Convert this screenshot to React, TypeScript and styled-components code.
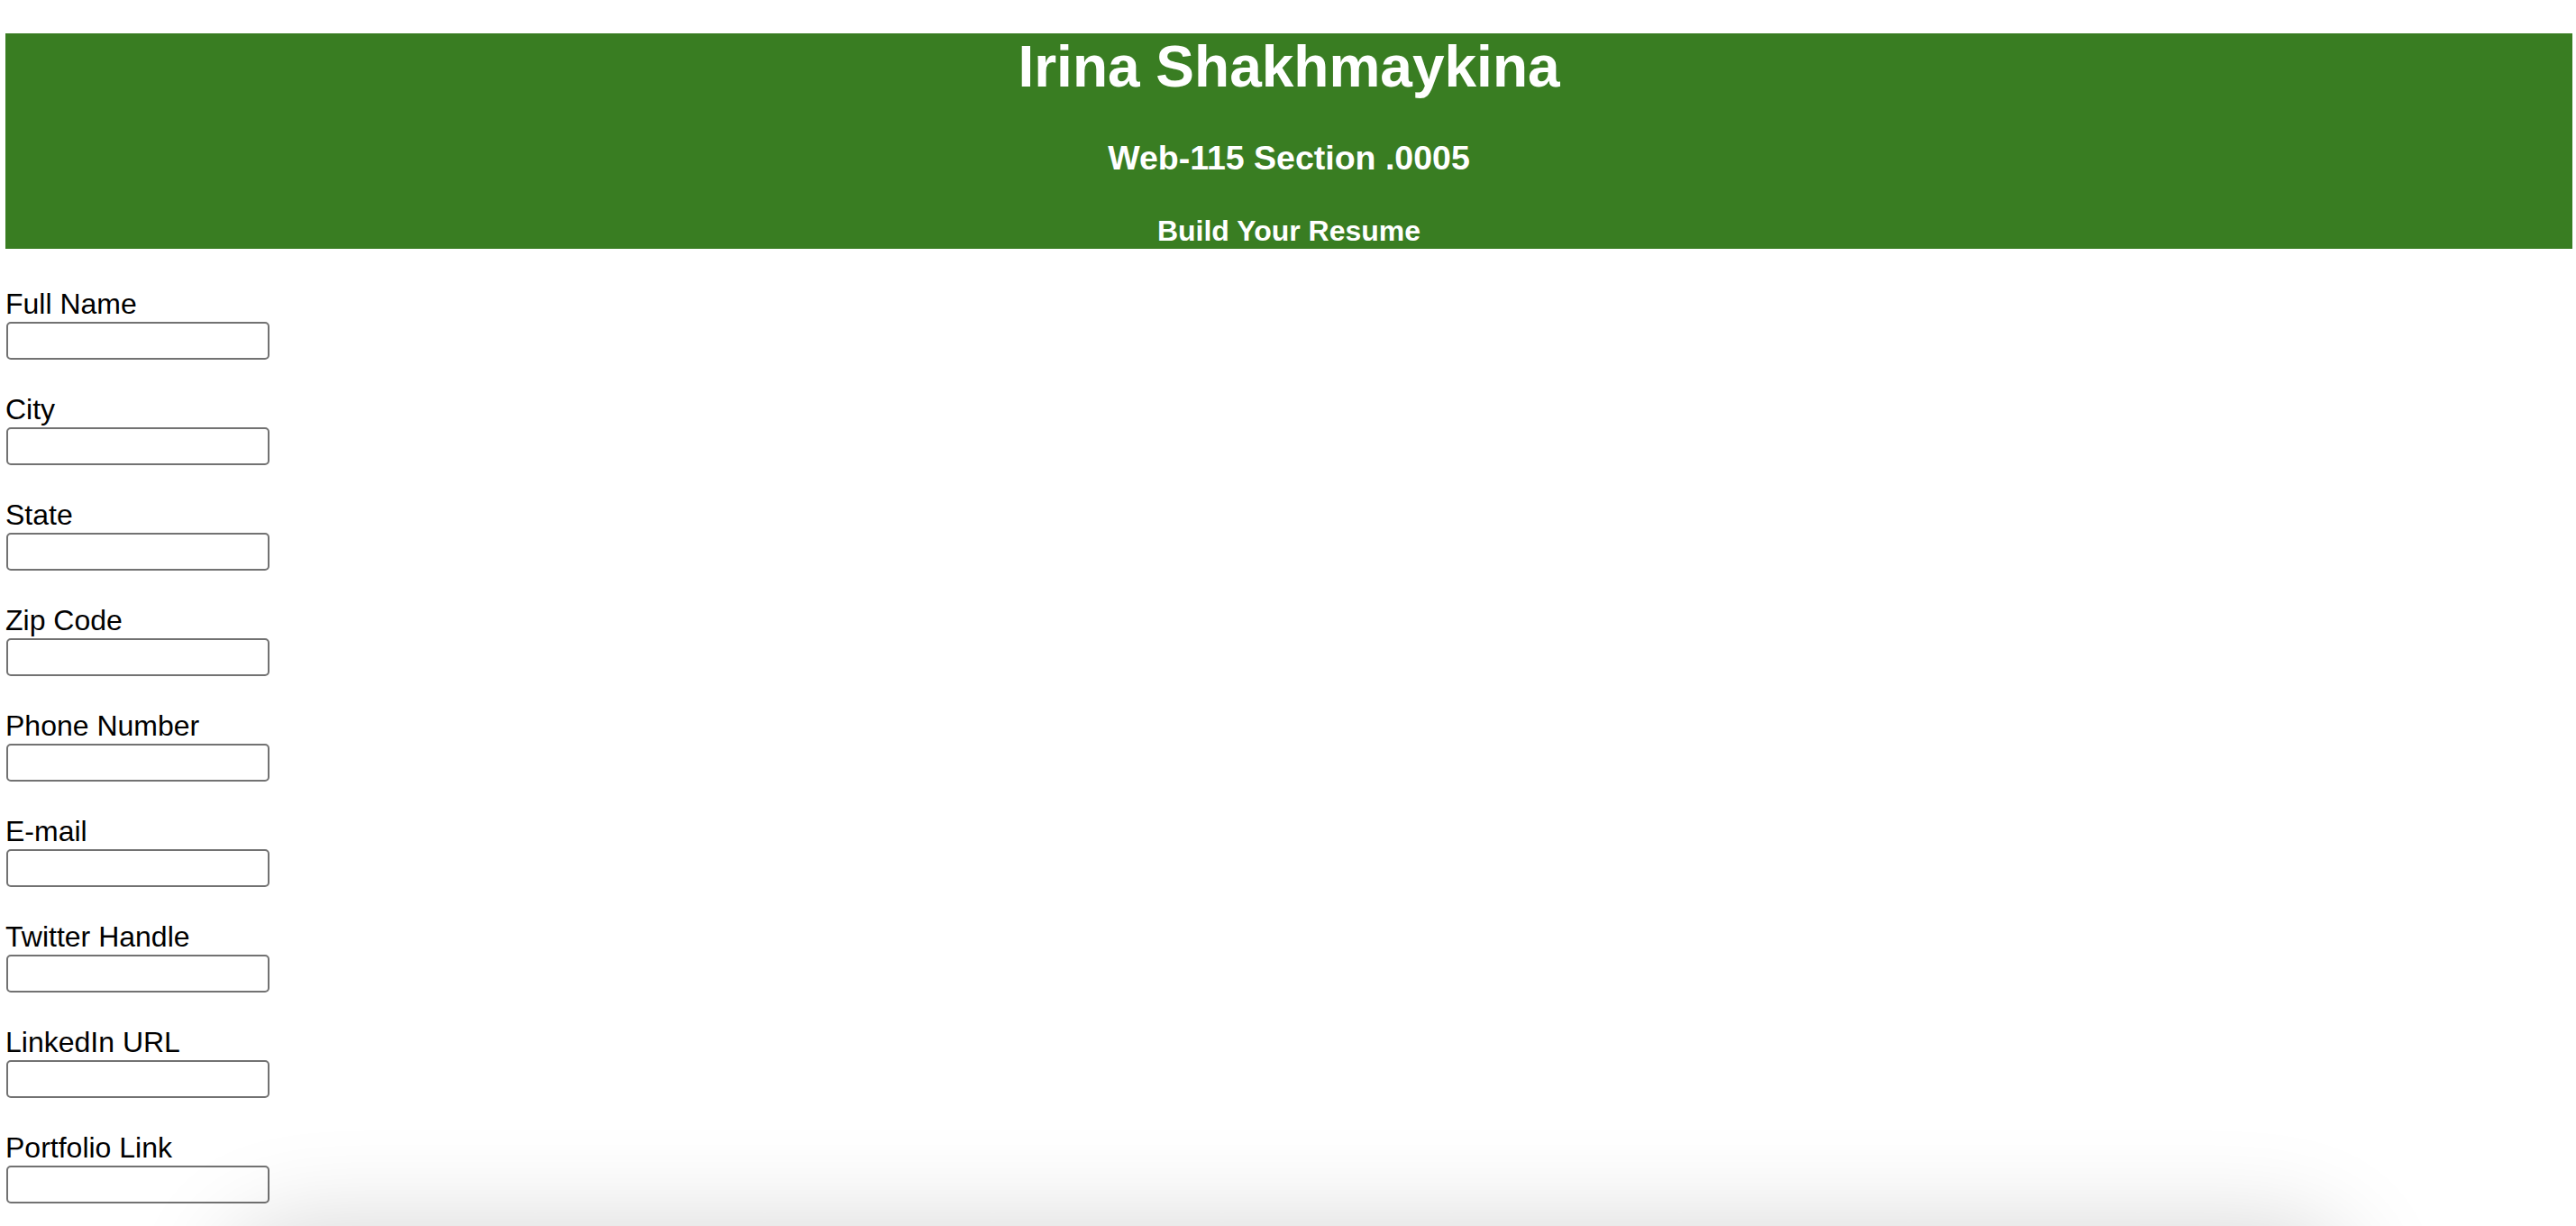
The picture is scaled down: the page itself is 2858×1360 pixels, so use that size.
import React from "react";
import styled, { createGlobalStyle } from "styled-components";

const GlobalStyle = createGlobalStyle`
  html, body {
    margin: 0;
    padding: 0;
    background: #ffffff;
  }
  body {
    font-family: "Liberation Sans", Arial, Helvetica, sans-serif;
    color: #000000;
    overflow: hidden;
  }
`;

const Page = styled.div`
  padding: 37px 4px 0 6px;
  min-height: 1323px;
`;

const Banner = styled.header`
  background: #397d22;
  color: #ffffff;
  text-align: center;
  padding: 0 0 1px;
`;

const Title = styled.h1`
  margin: 0 0 43px;
  font-size: 64px;
  line-height: 74px;
  font-weight: 700;
`;

const Subtitle = styled.h3`
  margin: 0 0 41px;
  font-size: 37.5px;
  line-height: 43px;
  font-weight: 700;
`;

const Tagline = styled.h4`
  margin: 0;
  font-size: 32px;
  line-height: 37px;
  font-weight: 700;
`;

const Form = styled.form`
  display: flex;
  flex-direction: column;
  gap: 36px;
  padding-top: 42px;
`;

const Field = styled.div`
  display: flex;
  flex-direction: column;
  align-items: flex-start;
`;

const Label = styled.label`
  font-size: 32px;
  line-height: 39px;
  color: #000000;
`;

const Input = styled.input`
  box-sizing: border-box;
  width: 292px;
  height: 42px;
  margin: 0 0 0 1px;
  border: 2px solid #727272;
  border-radius: 5px;
  background: #ffffff;
  font-family: "Liberation Sans", Arial, sans-serif;
  font-size: 26px;
  padding: 2px 4px;
  outline: none;
`;

const BottomShade = styled.div`
  position: fixed;
  left: 250px;
  right: 250px;
  top: 100%;
  height: 200px;
  border-radius: 80px;
  background: #d0d0d0;
  box-shadow: 0 0 110px rgba(0, 0, 0, 0.17);
  pointer-events: none;
`;

const fields = [
  { id: "fullName", label: "Full Name" },
  { id: "city", label: "City" },
  { id: "state", label: "State" },
  { id: "zip", label: "Zip Code" },
  { id: "phone", label: "Phone Number" },
  { id: "email", label: "E-mail" },
  { id: "twitter", label: "Twitter Handle" },
  { id: "linkedin", label: "LinkedIn URL" },
  { id: "portfolio", label: "Portfolio Link" },
];

export default function App() {
  return (
    <>
      <GlobalStyle />
      <Page>
        <Banner>
          <Title>Irina Shakhmaykina</Title>
          <Subtitle>Web-115 Section .0005</Subtitle>
          <Tagline>Build Your Resume</Tagline>
        </Banner>
        <Form onSubmit={(e) => e.preventDefault()}>
          {fields.map((f) => (
            <Field key={f.id}>
              <Label htmlFor={f.id}>{f.label}</Label>
              <Input id={f.id} type="text" />
            </Field>
          ))}
        </Form>
      </Page>
      <BottomShade />
    </>
  );
}
